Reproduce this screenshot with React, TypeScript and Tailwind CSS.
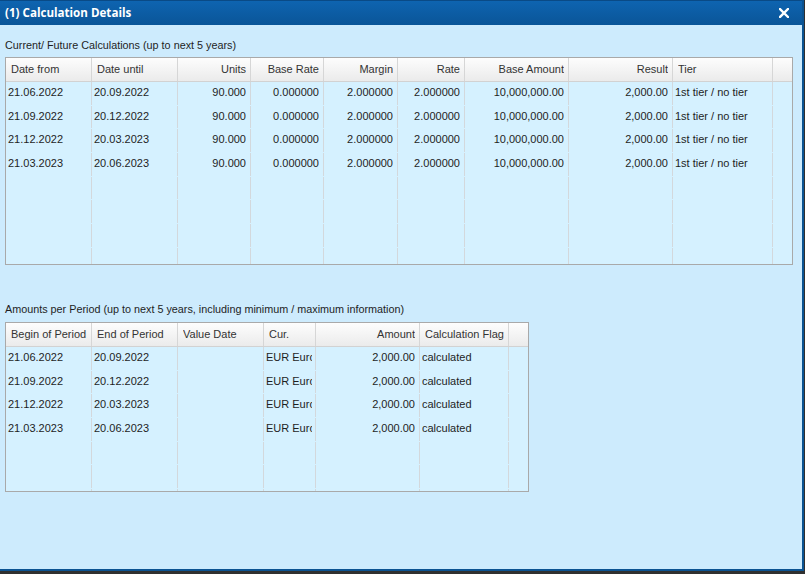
import React from "react";

type Col = { label: string; w: number; right?: boolean };

const cols1: Col[] = [
  { label: "Date from", w: 86 },
  { label: "Date until", w: 86 },
  { label: "Units", w: 73, right: true },
  { label: "Base Rate", w: 73, right: true },
  { label: "Margin", w: 74, right: true },
  { label: "Rate", w: 67, right: true },
  { label: "Base Amount", w: 104, right: true },
  { label: "Result", w: 104, right: true },
  { label: "Tier", w: 100 },
  { label: "", w: 19 },
];

const rows1: string[][] = [
  ["21.06.2022", "20.09.2022", "90.000", "0.000000", "2.000000", "2.000000", "10,000,000.00", "2,000.00", "1st tier / no tier", ""],
  ["21.09.2022", "20.12.2022", "90.000", "0.000000", "2.000000", "2.000000", "10,000,000.00", "2,000.00", "1st tier / no tier", ""],
  ["21.12.2022", "20.03.2023", "90.000", "0.000000", "2.000000", "2.000000", "10,000,000.00", "2,000.00", "1st tier / no tier", ""],
  ["21.03.2023", "20.06.2023", "90.000", "0.000000", "2.000000", "2.000000", "10,000,000.00", "2,000.00", "1st tier / no tier", ""],
];

const cols2: Col[] = [
  { label: "Begin of Period", w: 86 },
  { label: "End of Period", w: 86 },
  { label: "Value Date", w: 86 },
  { label: "Cur.", w: 52 },
  { label: "Amount", w: 104, right: true },
  { label: "Calculation Flag", w: 89 },
  { label: "", w: 19 },
];

const rows2: string[][] = [
  ["21.06.2022", "20.09.2022", "", "EUR Euro", "2,000.00", "calculated", ""],
  ["21.09.2022", "20.12.2022", "", "EUR Euro", "2,000.00", "calculated", ""],
  ["21.12.2022", "20.03.2023", "", "EUR Euro", "2,000.00", "calculated", ""],
  ["21.03.2023", "20.06.2023", "", "EUR Euro", "2,000.00", "calculated", ""],
];

function Grid({ cols, rows, bodyH, emptyRows }: { cols: Col[]; rows: string[][]; bodyH: number; emptyRows: number }) {
  const all = [...rows, ...Array.from({ length: emptyRows }, () => cols.map(() => ""))];
  return (
    <div className="border border-[#a9a9a9] bg-[#d5f1ff] self-start">
      <div className="flex h-[24px] border-b border-[#d2d2d2] bg-linear-to-b from-[#fdfdfd] to-[#ebebeb]">
        {cols.map((c, i) => (
          <div
            key={i}
            style={{ width: c.w }}
            className={`h-[23px] shrink-0 border-r border-[#d6d6d6] leading-[23px] text-[#333] ${
              i === cols.length - 1 ? "border-r-0" : ""
            } ${c.right ? "pr-[4px] text-right" : "pl-[5px] pr-[4px] text-left"}`}
          >
            <div className="overflow-hidden whitespace-nowrap">{c.label}</div>
          </div>
        ))}
      </div>
      <div className="overflow-hidden" style={{ height: bodyH }}>
        {all.map((r, ri) => (
          <div key={ri} className="flex h-[23.67px] overflow-hidden">
            {cols.map((c, ci) => (
              <div
                key={ci}
                style={{ width: c.w }}
                className={`h-[22.67px] shrink-0 border-r border-[#d3d8dc] leading-[21px] text-[#1e1e1e] ${
                  ci === cols.length - 1 ? "border-r-0" : ""
                } ${c.right ? "pr-[4px] text-right" : "pl-[2px] pr-[3px] text-left"}`}
              >
                <div className="overflow-hidden whitespace-nowrap">{r[ci]}</div>
              </div>
            ))}
          </div>
        ))}
      </div>
    </div>
  );
}

export default function App() {
  return (
    <div
      className="h-[574px] w-[805px] overflow-hidden bg-[#303030] text-[11px]"
      style={{ fontFamily: '"Liberation Sans", Arial, sans-serif' }}
    >
      <div className="flex h-[571px] w-[804px] flex-col border-r-2 border-b-2 border-[#0b5392] bg-[#cdebfd]">
        <div className="flex h-[25px] shrink-0 items-center justify-between border-t border-[#094a86] bg-linear-to-b from-[#0e64b0] to-[#0a5598] pl-[5px] pr-[13px] text-white">
          <span className="text-[11.6px] font-bold" style={{ fontFamily: '"Open Sans", Verdana, sans-serif' }}>
            (1) Calculation Details
          </span>
          <svg width="10" height="10" viewBox="0 0 10 10">
            <path d="M1 1 L9 9 M9 1 L1 9" stroke="white" strokeWidth="2.4" strokeLinecap="square" />
          </svg>
        </div>
        <div className="flex flex-col pl-[5px] pt-[13px]">
          <div className="h-[14px] text-[10.8px] leading-[14px] text-[#1e1e1e]">Current/ Future Calculations (up to next 5 years)</div>
          <div className="mt-[5px] flex">
            <Grid cols={cols1} rows={rows1} bodyH={182} emptyRows={4} />
          </div>
          <div className="mt-[37px] h-[14px] text-[10.8px] leading-[14px] text-[#1e1e1e]">
            Amounts per Period (up to next 5 years, including minimum / maximum information)
          </div>
          <div className="mt-[6px] flex">
            <Grid cols={cols2} rows={rows2} bodyH={144} emptyRows={3} />
          </div>
        </div>
      </div>
    </div>
  );
}
